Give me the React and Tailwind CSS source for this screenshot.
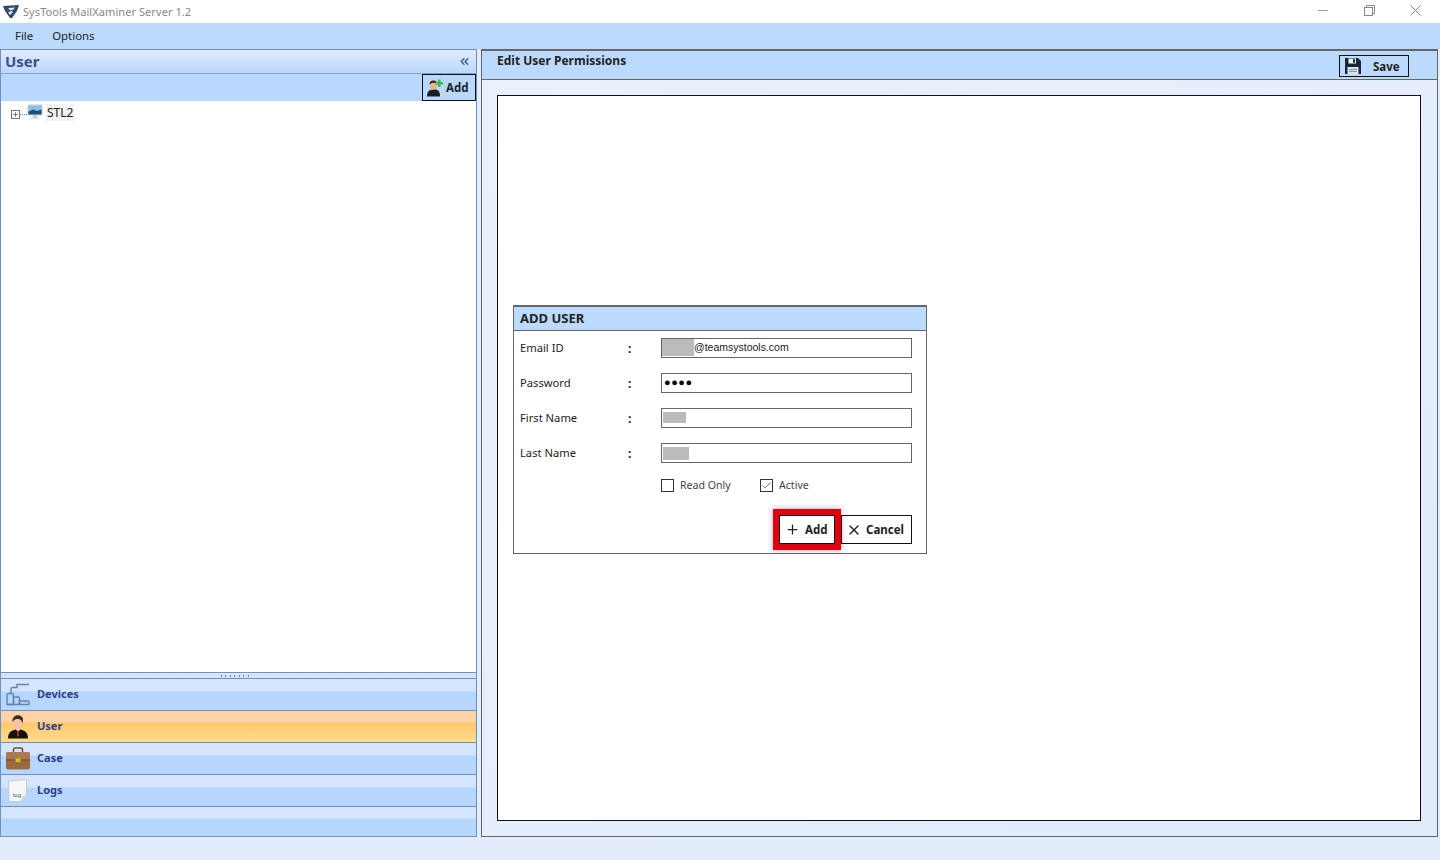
import { ChevronsLeft, Plus, X, Check } from "lucide-react";

const font = "font-['Noto_Sans','Open_Sans',sans-serif]";

function Logo() {
    return (
        <svg width="18" height="15" viewBox="0 0 18 15">
            <path d="M1 2 L17 1 L15 7 L10 14 L8 14 L3 7 Z" fill="#2f4a68" />
            <path d="M6 4 L13 3.5 L11 6 L8 6 L11 8 L8 11 L6 8 L9 7.5 Z" fill="#dfe8f2" />
        </svg>
    );
}

function MonitorIcon() {
    return (
        <svg width="16" height="16" viewBox="0 0 16 16">
            <rect x="0.5" y="0.5" width="15" height="11" rx="1" fill="#c8ced6" />
            <rect x="1.5" y="1.5" width="13" height="9" fill="#8fc0ea" />
            <path d="M1.5 7.5 L6 5.5 L10 7 L14.5 5.5 V10.5 H1.5 Z" fill="#1f4e79" />
            <rect x="6" y="11.5" width="4" height="2" fill="#b4bac2" />
            <rect x="4" y="13.5" width="8" height="1.5" fill="#d5d9de" />
        </svg>
    );
}

function AddUserIcon() {
    return (
        <svg width="18" height="19" viewBox="0 0 18 19">
            <path d="M1 18.5 C1 12.5 4 11.5 8 11.5 C12 11.5 14 13 14 18.5 Z" fill="#1d1d1d" />
            <ellipse cx="7.5" cy="7" rx="3.8" ry="4.8" fill="#e9b48c" />
            <path d="M3.5 6.5 C3 1.5 11 1 11.5 5.5 C9 4.5 6 4.5 3.5 6.5 Z" fill="#3b2a20" />
            <path d="M12 1.5 h2.5 v2.5 H17 V6.5 h-2.5 v2.5 H12 V6.5 H9.5 V4 H12 Z" fill="#3dbb4a" />
        </svg>
    );
}

function SaveIcon() {
    return (
        <svg width="16" height="16" viewBox="0 0 16 16">
            <path d="M0 0 H13 L16 3 V16 H0 Z" fill="#16263a" />
            <rect x="3.5" y="0.5" width="7.5" height="5" fill="#f2f4f6" />
            <rect x="8" y="1.2" width="2" height="3.5" fill="#16263a" />
            <rect x="2.5" y="9" width="11" height="7" fill="#dfe3e8" />
            <rect x="4" y="11" width="8" height="1" fill="#8b95a1" />
            <rect x="4" y="13" width="8" height="1" fill="#8b95a1" />
        </svg>
    );
}

function DevicesIcon() {
    return (
        <svg width="24" height="23" viewBox="0 0 24 23" fill="none" stroke="#5f86a8" strokeWidth="1.4">
            <path d="M1 21.5 V12 a1.5 1.5 0 0 1 1.5 -1.5 H6 a1.5 1.5 0 0 1 1.5 1.5 V21.5 Z" />
            <path d="M7.5 21.5 V14 H12 a1.5 1.5 0 0 1 1.5 1.5 V21.5" />
            <path d="M13.5 21.5 V18 H22 a1 1 0 0 1 1 1 V21.5 H1" />
            <path d="M5 10.5 V6 a1.5 1.5 0 0 1 1.5 -1.5 H11 V1.5 H23" />
        </svg>
    );
}

function UserIcon() {
    return (
        <svg width="20" height="25" viewBox="0 0 20 25">
            <path d="M0 24.5 C0 18 4 15.5 10 15.5 C16 15.5 20 18 20 24.5 Z" fill="#14110f" />
            <path d="M8 15 L10 19 L12 15 Z" fill="#f1f1f1" />
            <path d="M9.3 16.5 h1.4 l0.5 5 l-1.2 1.5 l-1.2 -1.5 Z" fill="#a82424" />
            <ellipse cx="9.5" cy="8.5" rx="5" ry="7" fill="#f3c3a0" />
            <path d="M4.5 8 C3.5 0.5 13.5 -1 15 5 L14.5 10 C14 6.5 12.5 5 10 5 C8 5 6 5.5 4.5 8 Z" fill="#3a2a22" />
        </svg>
    );
}

function CaseIcon() {
    return (
        <svg width="24" height="23" viewBox="0 0 24 23">
            <path d="M7.5 6 V2.5 a1.5 1.5 0 0 1 1.5 -1.5 H15 a1.5 1.5 0 0 1 1.5 1.5 V6" fill="none" stroke="#7c5230" strokeWidth="1.6" />
            <rect x="0" y="5" width="24" height="17.5" rx="2" fill="#9c6a40" />
            <rect x="0" y="5" width="24" height="7.5" rx="2" fill="#ad7a4f" />
            <rect x="0" y="12.5" width="24" height="1" fill="#6e4526" />
            <rect x="9.5" y="11.5" width="5" height="3.5" rx="0.5" fill="#e3bd1c" />
        </svg>
    );
}

function LogIcon() {
    return (
        <svg width="20" height="23" viewBox="0 0 20 23">
            <path d="M0.5 2 L18.5 0.5 V16 L13 22.5 H1 Z" fill="#f5f6f6" stroke="#c5cbd1" />
            <path d="M13 22.5 L14 17 L18.5 16 Z" fill="#d5d8dc" />
            <text x="5" y="18" fontSize="6" fill="#555" fontFamily="Liberation Sans, sans-serif">log</text>
        </svg>
    );
}

function NavRow({ icon, label, active }) {
    return (
        <div className={`flex h-8 border-b border-[#6e93bb] ${active ? "bg-[linear-gradient(#ffd3a6_0,#ffd3a6_11px,#fec867_12px,#fddc90_100%)]" : "bg-[linear-gradient(#d6e5fd_0,#d6e5fd_12px,#b7d6fd_13px,#b7d6fd_100%)]"}`}>
            <div className="w-[33px] flex justify-center items-center shrink-0">{icon}</div>
            <span className="ml-[3px] text-[11px] font-bold text-[#2e3f8a] leading-[29px]">{label}</span>
        </div>
    );
}

function Field({ label, children }) {
    return (
        <div className="flex items-center h-[20px] mb-[15px]">
            <span className="w-[114px] pl-[6px] pt-px text-[11.2px] text-[#222]">{label}</span>
            <span className="w-[33px] pt-px text-xs text-[#222] font-bold">:</span>
            <div className="relative w-[251px] h-[20px] border border-[#666] bg-white flex items-center overflow-hidden text-[10.5px] text-[#222] font-['Liberation_Sans',sans-serif]">
                {children}
            </div>
        </div>
    );
}

function Blur({ className }) {
    return <div className={`absolute bg-[#bbbbbb] blur-[0.6px] ${className}`} />;
}

function App() {
    return (
        <div className={`w-[1440px] h-[860px] overflow-hidden flex flex-col bg-[#e3ecfd] ${font}`}>
            {/* title bar */}
            <div className="h-[23px] bg-white flex items-center shrink-0">
                <div className="w-[23px] pl-[2px] flex"><Logo /></div>
                <span className="pt-px text-[11px] tracking-[0.07px] text-[#888]">SysTools MailXaminer Server 1.2</span>
                <div className="ml-auto flex items-center h-full pr-[2px] pb-[2px]">
                    <div className="w-[46px] flex justify-center"><div className="w-[10px] h-px bg-[#999]" /></div>
                    <div className="w-[46px] flex justify-center">
                        <svg width="11" height="11" viewBox="0 0 11 11" fill="none" stroke="#888">
                            <rect x="0.5" y="2.5" width="8" height="8" />
                            <path d="M2.5 2.5 V0.5 H10.5 V8.5 H8.5" />
                        </svg>
                    </div>
                    <div className="w-[46px] flex justify-center">
                        <svg width="11" height="11" viewBox="0 0 11 11" stroke="#888"><path d="M0.5 0.5 L10.5 10.5 M10.5 0.5 L0.5 10.5" /></svg>
                    </div>
                </div>
            </div>

            {/* menu */}
            <div className="h-[26px] bg-[#bcdafe] flex items-center pl-[15px] gap-[19px] text-[11.4px] text-[#222] shrink-0">
                <span>File</span>
                <span>Options</span>
            </div>

            <div className="flex-1 flex pb-[23px] pr-[2px] min-h-0">
                {/* left panel */}
                <div className="w-[477px] shrink-0 flex flex-col border border-[#6e93bb]">
                    <div className="h-[24px] shrink-0 flex items-center justify-between pl-1 pr-[5px] pb-px border-b border-[#7ea3cc] bg-[linear-gradient(#e0ebfb,#bcd8fb)]">
                        <span className="text-[15px] font-bold text-[#3d4f8f]">User</span>
                        <ChevronsLeft size={13} className="text-[#2d5c8f]" strokeWidth={2.5} />
                    </div>
                    <div className="h-[27px] shrink-0 bg-[#b9d8fd] flex justify-end">
                        <div className="w-[54px] h-[27px] border border-[#111] flex items-center pl-[3px] gap-[2px] text-[11.5px] font-bold text-[#222]">
                            <AddUserIcon />
                            <span>Add</span>
                        </div>
                    </div>
                    <div className="flex-1 bg-white pl-[10px] pt-[3px]">
                        <div className="flex items-center h-[16px]">
                            <div className="w-[9px] h-[9px] mt-[4px] border border-[#777] flex items-center justify-center">
                                <Plus size={7} className="text-[#333]" strokeWidth={2} />
                            </div>
                            <div className="w-[7px] mt-[4px] border-t border-dotted border-[#888]" />
                            <MonitorIcon />
                            <span className="ml-[3px] px-[1px] h-[17px] leading-[17px] text-xs text-[#222] bg-[#f3f3f3]">STL2</span>
                        </div>
                    </div>
                    {/* splitter */}
                    <div className="h-[7px] shrink-0 border-y border-[#6e93bb] bg-[#d6e5fd] flex justify-center items-center gap-[3.5px] pr-[8px]">
                        {[0, 1, 2, 3, 4, 5, 6].map((i) => <div key={i} className="w-[1px] h-[2px] bg-[#5f86a8]" />)}
                    </div>
                    <NavRow icon={<DevicesIcon />} label="Devices" />
                    <NavRow icon={<UserIcon />} label="User" active />
                    <NavRow icon={<CaseIcon />} label="Case" />
                    <NavRow icon={<LogIcon />} label="Logs" />
                    <div className="h-[29px] shrink-0 bg-[linear-gradient(#d6e5fd_0,#d6e5fd_11px,#b7d6fd_12px,#b7d6fd_100%)]" />
                </div>

                {/* right panel */}
                <div className="ml-[4px] flex-1 flex flex-col border border-[#666] border-t-2 bg-[linear-gradient(135deg,#eaf1fd,#e1ebfc)]">
                    <div className="h-[29px] shrink-0 flex justify-between bg-[#bcdafe] border-b border-[#666] pl-[15px] pr-[28px]">
                        <span className="text-[12px] font-bold text-[#222] leading-[19px]">Edit User Permissions</span>
                        <div className="mt-[4px] w-[70px] h-[22px] border border-[#111] flex items-center pl-[5px] text-[11.5px] font-bold text-[#222]">
                            <SaveIcon />
                            <span className="ml-[12px] pt-px">Save</span>
                        </div>
                    </div>
                    <div className="flex-1 ml-[15px] mr-[16px] mt-[15px] mb-[15px] border border-[#111] bg-white pl-[15px] pt-[209px]">
                        {/* dialog */}
                        <div className="w-[414px] h-[249px] border border-[#666] border-t-2 flex flex-col">
                            <div className="h-[24px] shrink-0 bg-[#bcdafe] border-b border-[#666] pl-[6px] text-[13px] font-bold text-[#222] leading-[22px]">ADD USER</div>
                            <div className="pt-[7px]">
                                <Field label="Email ID">
                                    <Blur className="left-0 top-0 w-[32px] h-[17px]" />
                                    <span className="ml-[32px] relative -mt-px">@teamsystools.com</span>
                                </Field>
                                <Field label="Password">
                                    <span className="ml-[2px] -mt-[2px] text-[11px] tracking-[0.5px] text-black leading-none">●●●●</span>
                                </Field>
                                <Field label="First Name">
                                    <Blur className="left-[1px] top-[3px] w-[23px] h-[11px]" />
                                </Field>
                                <Field label="Last Name">
                                    <Blur className="left-[1px] top-[3px] w-[26px] h-[13px]" />
                                </Field>
                            </div>
                            <div className="flex items-center pl-[147px] h-[14px] text-[10.6px] text-[#444]">
                                <div className="w-[13px] h-[13px] border border-[#333] bg-white" />
                                <span className="ml-[6px] w-[80px] pt-px">Read Only</span>
                                <div className="w-[13px] h-[13px] border border-[#333] bg-white flex items-center justify-center">
                                    <Check size={11} className="text-[#333]" strokeWidth={1.5} />
                                </div>
                                <span className="ml-[6px] pt-px">Active</span>
                            </div>
                            <div className="flex justify-end pr-[14px] mt-[23px]">
                                <div className="relative w-[56px] h-[29px] mr-[6px] bg-white border border-[#111] flex items-center pl-[5px] text-[11.5px] font-bold text-[#222] outline-[6px] outline-[#e00012] shadow-[0_0_5px_7px_rgba(80,0,0,0.25)] z-10">
                                    <Plus size={15} className="text-[#222]" strokeWidth={2} />
                                    <span className="ml-[5px]">Add</span>
                                </div>
                                <div className="w-[71px] h-[29px] bg-white border border-[#111] flex items-center pl-[4px] text-[11.5px] font-bold text-[#222]">
                                    <X size={16} className="text-[#222]" strokeWidth={2} />
                                    <span className="ml-[4px]">Cancel</span>
                                </div>
                            </div>
                        </div>
                    </div>
                </div>
            </div>
        </div>
    );
}

export default App;
